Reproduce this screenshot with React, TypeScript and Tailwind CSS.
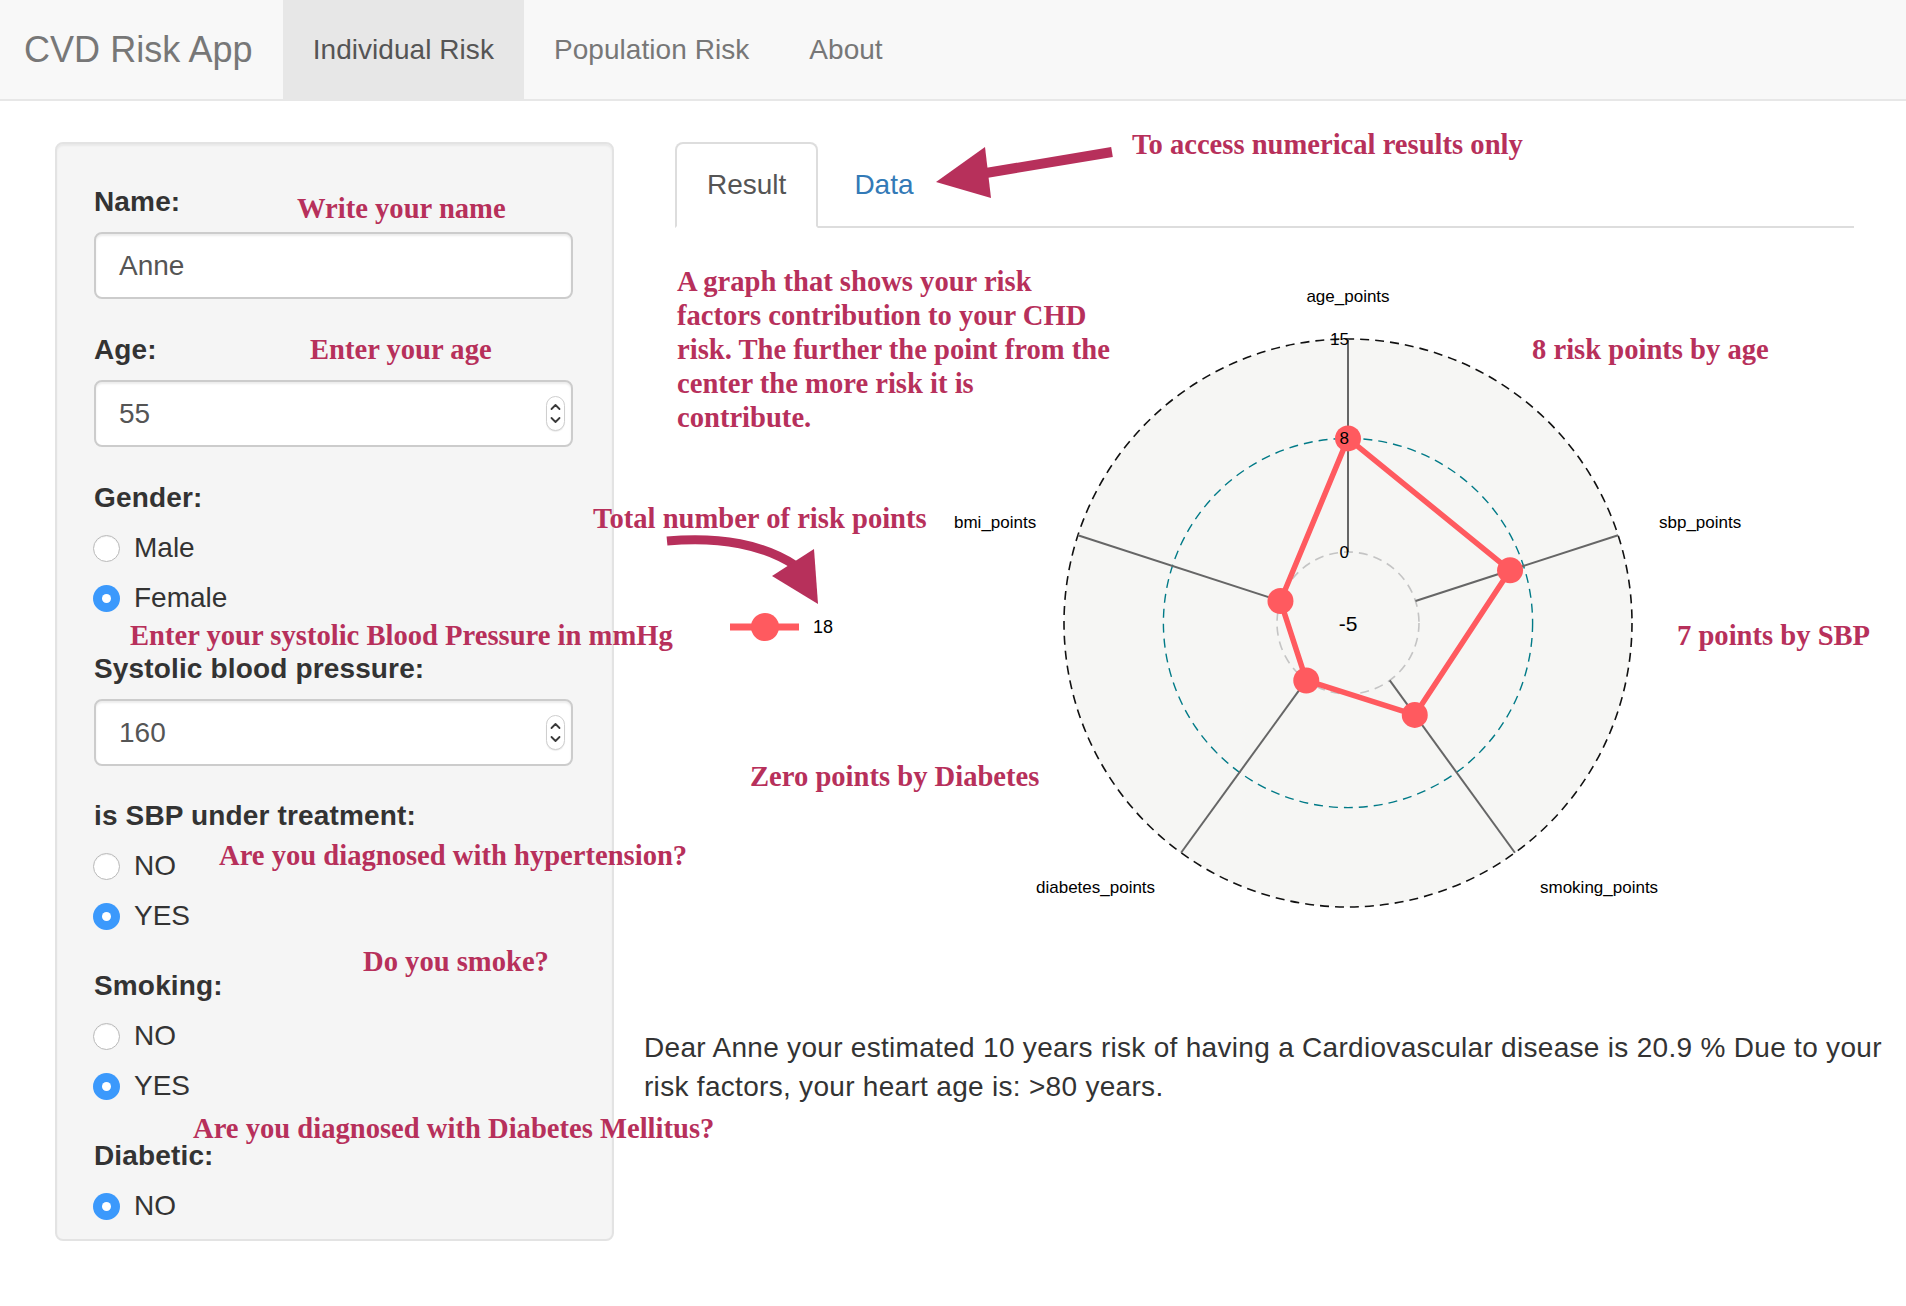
import React from "react";

const ann =
  "absolute whitespace-nowrap font-['Liberation_Serif',serif] text-[28.6px] font-bold leading-[34px] text-[#b7305b]";

const label = "h-[40px] text-[28px] font-bold leading-[40px] tracking-[0.15px] text-[#333]";

type RadioProps = { text: string; checked?: boolean };
const Radio = ({ text, checked }: RadioProps) => (
  <div className="-ml-[1px] mt-[10px] flex h-[40px] items-center gap-[14px]">
    {checked ? (
      <span className="flex h-[27px] w-[27px] items-center justify-center rounded-full bg-[#3b99fc]">
        <span className="h-[9px] w-[9px] rounded-full bg-white" />
      </span>
    ) : (
      <span className="h-[27px] w-[27px] rounded-full border border-[#b9b9b9] bg-white shadow-[inset_0_1px_1px_rgba(0,0,0,0.06)]" />
    )}
    <span className="text-[28px] text-[#333]">{text}</span>
  </div>
);

const Spinner = () => (
  <span className="flex h-[35px] w-[19px] items-center justify-center rounded-full border border-[#cfcfcf] bg-white shadow-[0_1px_1px_rgba(0,0,0,0.08)]">
    <svg width="17" height="33" viewBox="0 0 17 33">
      <path d="M4.5 12 L8.5 8 L12.5 12" fill="none" stroke="#3a3a3a" strokeWidth="1.8" strokeLinecap="round" strokeLinejoin="round" />
      <path d="M4.5 21 L8.5 25 L12.5 21" fill="none" stroke="#3a3a3a" strokeWidth="1.8" strokeLinecap="round" strokeLinejoin="round" />
    </svg>
  </span>
);

const Field = ({ value, spinner }: { value: string; spinner?: boolean }) => (
  <div className="mt-[10px] flex h-[67px] items-center justify-between rounded-[8px] border-2 border-[#ccc] bg-white pl-[23px] pr-[6px] text-[28px] text-[#555] shadow-[inset_0_2px_2px_rgba(0,0,0,0.075)]">
    <span>{value}</span>
    {spinner && <Spinner />}
  </div>
);

// radar chart geometry (svg coords)
const CX = 673;
const CY = 395;
const rad = (v: number) => (v + 5) * 14.2;
const pt = (i: number, v: number) => {
  const a = (i * 72 * Math.PI) / 180;
  const r = rad(v);
  return [CX + r * Math.sin(a), CY - r * Math.cos(a)];
};
const values = [8, 7, 3, 0, 0];

const Radar = () => {
  const poly = values.map((v, i) => pt(i, v));
  const font = "Liberation Sans, Arial, sans-serif";
  return (
    <svg width="1179" height="800" viewBox="0 0 1179 800" className="block">
      <circle cx={CX} cy={CY} r={rad(15)} fill="#f6f6f4" stroke="#111" strokeWidth="1.6" strokeDasharray="9 6" />
      <circle cx={CX} cy={CY} r={rad(8)} fill="none" stroke="#007A87" strokeWidth="1.4" strokeDasharray="9 6" />
      <circle cx={CX} cy={CY} r={rad(0)} fill="none" stroke="#c4c4c4" strokeWidth="1.6" strokeDasharray="9 6" />
      {values.map((_, i) => {
        const [x1, y1] = pt(i, 0);
        const [x2, y2] = pt(i, 15);
        return <line key={i} x1={x1} y1={y1} x2={x2} y2={y2} stroke="#666" strokeWidth="2" />;
      })}
      <polygon
        points={poly.map((p) => p.join(",")).join(" ")}
        fill="none"
        stroke="#ff5a5f"
        strokeWidth="5.5"
        strokeLinejoin="round"
      />
      {poly.map(([x, y], i) => (
        <circle key={i} cx={x} cy={y} r="13" fill="#ff5a5f" />
      ))}
      <g fontFamily={font} fontSize="17" fill="#000">
        <text x={CX + 1} y={CY - rad(15) + 6} textAnchor="end">15</text>
        <text x={CX + 1} y={CY - rad(8) + 6} textAnchor="end">8</text>
        <text x={CX + 1} y={CY - rad(0) + 6} textAnchor="end">0</text>
        <text x={CX} y={CY + 8} textAnchor="middle" fontSize="21">-5</text>
        <text x={CX} y={74} textAnchor="middle">age_points</text>
        <text x={984} y={300}>sbp_points</text>
        <text x={865} y={665}>smoking_points</text>
        <text x={361} y={665}>diabetes_points</text>
        <text x={279} y={300}>bmi_points</text>
      </g>
      {/* legend */}
      <line x1="55" y1="399" x2="124" y2="399" stroke="#ff5a5f" strokeWidth="7" />
      <circle cx="90" cy="399" r="14" fill="#ff5a5f" />
      <text x="138" y="405" fontFamily={font} fontSize="18" fill="#000">18</text>
    </svg>
  );
};

export default function App() {
  return (
    <div className="relative h-[1306px] w-[1906px] overflow-hidden bg-white font-['Liberation_Sans',Arial,sans-serif]">
      <nav className="flex h-[101px] items-stretch border-b-2 border-[#e7e7e7] bg-[#f8f8f8] tracking-[0.05px]">
        <div className="flex items-center pl-[24px] pr-[30px] text-[36px] text-[#777]">CVD Risk App</div>
        <div className="flex items-center bg-[#e7e7e7] px-[30px] text-[28px] text-[#555]">Individual Risk</div>
        <div className="flex items-center px-[30px] text-[28px] text-[#777]">Population Risk</div>
        <div className="flex items-center px-[30px] text-[28px] text-[#777]">About</div>
      </nav>

      <div className="flex pt-[41px]">
        <div className="ml-[55px] w-[559px] rounded-[8px] border-2 border-[#e3e3e3] bg-[#f5f5f5] pb-[13px] pl-[37px] pr-[39px] pt-[38px] shadow-[inset_0_2px_2px_rgba(0,0,0,0.05)]">
          <div className={label}>Name:</div>
          <Field value="Anne" />
          <div className={`${label} mt-[31px]`}>Age:</div>
          <Field value="55" spinner />
          <div className={`${label} mt-[31px]`}>Gender:</div>
          <Radio text="Male" />
          <Radio text="Female" checked />
          <div className={`${label} mt-[31px]`}>Systolic blood pressure:</div>
          <Field value="160" spinner />
          <div className={`${label} mt-[30px]`}>is SBP under treatment:</div>
          <Radio text="NO" />
          <Radio text="YES" checked />
          <div className={`${label} mt-[30px]`}>Smoking:</div>
          <Radio text="NO" />
          <Radio text="YES" checked />
          <div className={`${label} mt-[30px]`}>Diabetic:</div>
          <Radio text="NO" checked />
        </div>

        <div className="ml-[61px] flex w-[1179px] flex-col">
          <div className="flex border-b-2 border-[#ddd]">
            <div className="-mb-[2px] rounded-t-[8px] border-2 border-[#ddd] border-b-transparent bg-white px-[30px] pb-[19px] pt-[21px] text-[28px] leading-[40px] text-[#555]">
              Result
            </div>
            <div className="ml-[4px] border-2 border-transparent px-[30px] pb-[19px] pt-[21px] text-[28px] leading-[40px] text-[#337ab7]">
              Data
            </div>
          </div>
          <Radar />
          <p className="-ml-[31px] w-[1262px] text-[28px] leading-[39px] tracking-[0.3px] text-[#333]">
            Dear Anne your estimated 10 years risk of having a Cardiovascular disease is 20.9 % Due to your
            <br />
            risk factors, your heart age is: &gt;80 years.
          </p>
        </div>
      </div>

      {/* annotations laid over the screenshot */}
      <span className={`${ann} left-[297px] top-[192px]`}>Write your name</span>
      <span className={`${ann} left-[310px] top-[333px]`}>Enter your age</span>
      <span className={`${ann} left-[130px] top-[619px]`}>Enter your systolic Blood Pressure in mmHg</span>
      <span className={`${ann} left-[219px] top-[839px]`}>Are you diagnosed with hypertension?</span>
      <span className={`${ann} left-[363px] top-[945px]`}>Do you smoke?</span>
      <span className={`${ann} left-[193px] top-[1112px]`}>Are you diagnosed with Diabetes Mellitus?</span>
      <span className={`${ann} left-[593px] top-[502px]`}>Total number of risk points</span>
      <span className={`${ann} left-[750px] top-[760px]`}>Zero points by Diabetes</span>
      <span className={`${ann} left-[677px] top-[265px]`}>
        A graph that shows your risk
        <br />
        factors contribution to your CHD
        <br />
        risk. The further the point from the
        <br />
        center the more risk it is
        <br />
        contribute.
      </span>
      <span className={`${ann} left-[1532px] top-[333px]`}>8 risk points by age</span>
      <span className={`${ann} left-[1677px] top-[619px]`}>7 points by SBP</span>
      <span className={`${ann} left-[1132px] top-[128px]`}>To access numerical results only</span>

      <svg className="pointer-events-none absolute left-0 top-0" width="1906" height="1306" viewBox="0 0 1906 1306">
        <line x1="1112" y1="152" x2="980" y2="174" stroke="#b7305b" strokeWidth="10" />
        <polygon points="936,182 985,147 991,198" fill="#b7305b" />
        <path d="M667 541 C720 536 765 545 796 566" fill="none" stroke="#b7305b" strokeWidth="9" />
        <polygon points="772,576 814,549 818,604" fill="#b7305b" />
      </svg>
    </div>
  );
}
